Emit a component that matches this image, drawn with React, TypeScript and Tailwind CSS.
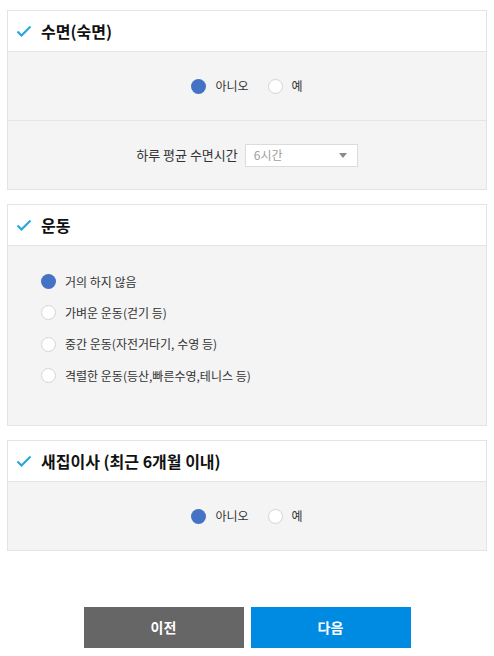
import React from 'react';

const font = { fontFamily: '"Noto Sans CJK KR", "Noto Sans", sans-serif' };

const Check = () => (
  <svg width="16" height="12" viewBox="0 0 16 12" className="shrink-0">
    <path d="M1.5 6.5 L5.5 10.5 L14.5 1.5" fill="none" stroke="#2aa8dc" strokeWidth="2.2" />
  </svg>
);

const Radio = ({ on, label }: { on?: boolean; label: string }) => (
  <label className="flex items-center gap-[9px] text-[12px] text-[#333]">
    <span
      className={`w-[15px] h-[15px] rounded-full shrink-0 ${
        on ? 'bg-[#4472c4]' : 'bg-white border border-[#d4d4d4]'
      }`}
    />
    <span className="leading-none">{label}</span>
  </label>
);

const Section = ({ title, children }: { title: string; children: React.ReactNode }) => (
  <div className="border border-[#e4e4e4]">
    <div className="h-[41px] bg-white flex items-center gap-[9px] pl-[8px] border-b border-[#e4e4e4]">
      <Check />
      <span className="text-[16px] font-bold text-[#111]">{title}</span>
    </div>
    <div className="bg-[#f4f4f4]">{children}</div>
  </div>
);

const YesNo = () => (
  <div className="h-[68px] flex items-center justify-center gap-[19px]">
    <Radio on label="아니오" />
    <Radio label="예" />
  </div>
);

export default function App() {
  return (
    <div className="w-[494px] h-[656px] bg-white px-[7px] pt-[10px]" style={font}>
      <div className="flex flex-col gap-[14px]">
        <Section title="수면(숙면)">
          <YesNo />
          <div className="h-[69px] border-t border-[#e4e4e4] flex items-center justify-center gap-[7px]">
            <span className="text-[13px] text-[#333]">하루 평균 수면시간</span>
            <div className="w-[113px] h-[23px] bg-white border border-[#dcdcdc] flex items-center justify-between pl-[8px] pr-[10px]">
              <span className="text-[12px] text-[#a0a0a0]">6시간</span>
              <svg width="8" height="5" viewBox="0 0 8 5">
                <path d="M0 0 H8 L4 5 Z" fill="#8a8a8a" />
              </svg>
            </div>
          </div>
        </Section>

        <Section title="운동">
          <div className="h-[179px] flex flex-col gap-[16.4px] pl-[33px] pt-[28px]">
            <Radio on label="거의 하지 않음" />
            <Radio label="가벼운 운동(걷기 등)" />
            <Radio label="중간 운동(자전거타기, 수영 등)" />
            <Radio label="격렬한 운동(등산,빠른수영,테니스 등)" />
          </div>
        </Section>

        <Section title="새집이사 (최근 6개월 이내)">
          <YesNo />
        </Section>
      </div>

      <div className="flex justify-center gap-[7px] mt-[56px]">
        <button className="w-[160px] h-[41px] bg-[#666666] text-white text-[14px] font-bold">이전</button>
        <button className="w-[160px] h-[41px] bg-[#008be3] text-white text-[14px] font-bold">다음</button>
      </div>
    </div>
  );
}
